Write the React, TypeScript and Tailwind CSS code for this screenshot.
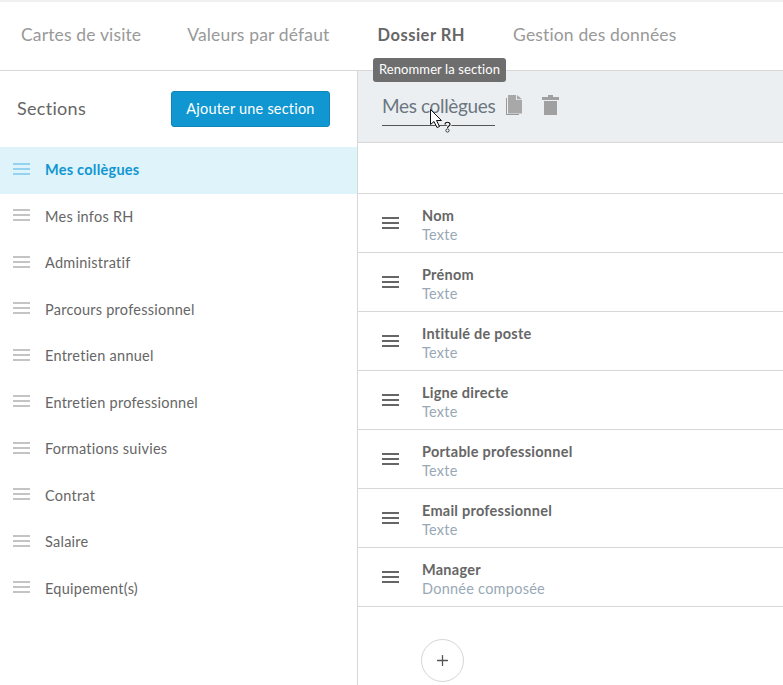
import { Plus } from "lucide-react";

const sections = [
  "Mes collègues",
  "Mes infos RH",
  "Administratif",
  "Parcours professionnel",
  "Entretien annuel",
  "Entretien professionnel",
  "Formations suivies",
  "Contrat",
  "Salaire",
  "Equipement(s)",
];

const fields = [
  ["Nom", "Texte"],
  ["Prénom", "Texte"],
  ["Intitulé de poste", "Texte"],
  ["Ligne directe", "Texte"],
  ["Portable professionnel", "Texte"],
  ["Email professionnel", "Texte"],
  ["Manager", "Donnée composée"],
];

function Grip({ className }: { className: string }) {
  return (
    <div className={`flex w-[17px] flex-col gap-[3px] ${className}`}>
      <span className="h-[2px] bg-current" />
      <span className="h-[2px] bg-current" />
      <span className="h-[2px] bg-current" />
    </div>
  );
}

export default function App() {
  return (
    <div className="h-[685px] w-[783px] overflow-hidden bg-white font-['Lato','Liberation_Sans',sans-serif]">
      {/* Tabs */}
      <header className="flex h-[71px] items-center border-t-2 border-b border-t-[#f0f0f0] border-b-[#d8d8d8] pb-[1px] pl-[21px] text-[17.5px] tracking-[0.15px] text-[#999999]">
        <span>Cartes de visite</span>
        <span className="ml-[46px]">Valeurs par défaut</span>
        <span className="ml-[48px] text-[16.5px] font-bold tracking-[0.5px] text-[#666666]">Dossier RH</span>
        <span className="ml-[48px]">Gestion des données</span>
      </header>

      <div className="flex h-[614px]">
        {/* Left column */}
        <aside className="w-[358px] shrink-0 border-r border-[#d8d8d8]">
          <div className="flex h-[76px] items-center justify-between pr-[27px] pb-[2px] pl-[17px]">
            <span className="text-[18px] tracking-[0.3px] text-[#666666]">Sections</span>
            <button className="mt-[2px] h-[36px] w-[159px] rounded-[3px] border border-[#0e86b8] bg-[#1097d1] text-[14.5px] tracking-[0.2px] text-white">
              Ajouter une section
            </button>
          </div>
          <ul>
            {sections.map((name, i) => (
              <li
                key={name}
                className={`flex h-[46.5px] items-center gap-[15px] pl-[13px] ${
                  i === 0 ? "bg-[#dff3fb] font-bold text-[#1097d1]" : "text-[#666666]"
                }`}
              >
                <Grip className={`mb-[3px] ${i === 0 ? "text-[#93d3ef]" : "text-[#c4c4c4]"}`} />
                <span className="text-[14.5px] tracking-[0.25px]">{name}</span>
              </li>
            ))}
          </ul>
        </aside>

        {/* Right column */}
        <main className="min-w-0 flex-1">
          <div className="relative flex h-[72px] items-start border-b border-[#d8d8d8] bg-[#ebeff2] pt-[22px] pl-[24px]">
            <span className="border-b border-[#555555] pb-[6px] text-[19px] leading-[26px] tracking-[-0.35px] text-[#6b7680]">
              Mes collègues
            </span>
            <svg className="mt-[2px] ml-[11px]" width="16" height="20" viewBox="0 0 16 20">
              <path d="M0 3h1v16h12v1H0z" fill="#999999" />
              <path d="M2 0h8v5h6v13.5H2z" fill="#a8a8a8" />
              <path d="M11 0l5 4.2h-5z" fill="#a8a8a8" />
            </svg>
            <svg className="mt-[2px] ml-[20px]" width="17" height="20" viewBox="0 0 17 20" fill="#a0a0a0">
              <path d="M6 0h5v2h6v3H0V2h6z" />
              <path d="M2 6h13v14H2z" />
            </svg>
            {/* tooltip */}
            <div className="absolute top-[-13px] left-[15px] flex h-[24px] w-[133px] items-center justify-center rounded-[3px] bg-[#6e6e6e] text-[13px] tracking-[0.1px] text-white">
              Renommer la section
            </div>
            {/* cursor */}
            <svg className="absolute top-[38px] left-[72px]" width="24" height="26" viewBox="0 0 24 26">
              <path d="M0.5 0.5v15l3.5-3 3 6 2.5-1-3-6h5z" fill="#ffffff" stroke="#111111" strokeWidth="1" />
              <path d="M15 15.5c0-3 5-3 5 0 0 1.5-2.5 1.5-2.5 3.5" fill="none" stroke="#ffffff" strokeWidth="3.2" />
              <path d="M15 15.5c0-3 5-3 5 0 0 1.5-2.5 1.5-2.5 3.5" fill="none" stroke="#111111" strokeWidth="1.2" />
              <circle cx="17.5" cy="21.5" r="1.6" fill="#ffffff" stroke="#111111" strokeWidth="0.8" />
            </svg>
          </div>
          <div className="h-[51px] border-b border-[#d8d8d8]" />
          {fields.map(([label, type]) => (
            <div key={label} className="flex h-[59px] items-center border-b border-[#d8d8d8] pl-[24px]">
              <Grip className="text-[#666666]" />
              <div className="mt-[3px] ml-[23px] flex flex-col">
                <span className="text-[14.5px] leading-[19px] font-bold tracking-[0.25px] text-[#666666]">{label}</span>
                <span className="text-[14.5px] leading-[19px] tracking-[0.25px] text-[#99a8b5]">{type}</span>
              </div>
            </div>
          ))}
          <div className="pt-[32px] pl-[63px]">
            <button className="flex h-[43px] w-[43px] items-center justify-center rounded-full border border-[#d5d5d5] bg-white text-[#555555]">
              <Plus size={17} strokeWidth={1.8} />
            </button>
          </div>
        </main>
      </div>
    </div>
  );
}
